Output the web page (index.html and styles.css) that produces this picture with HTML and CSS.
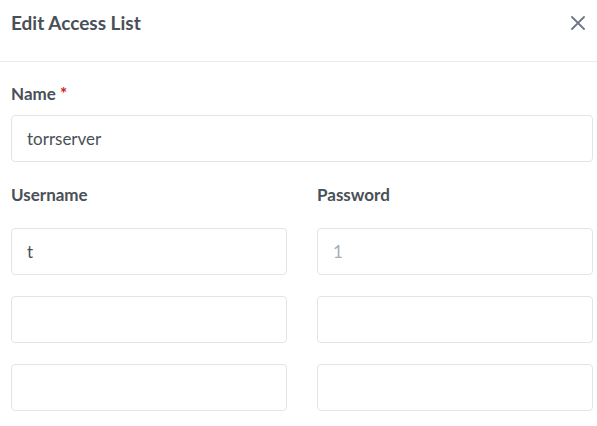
FILE: index.html
```html
<!DOCTYPE html>
<html>
<head>
<meta charset="utf-8">
<link rel="stylesheet" href="styles.css">
</head>
<body>
<div class="modal">
  <div class="modal-header">
    <h5 class="modal-title">Edit Access List</h5>
    <button class="close" aria-label="Close">
      <svg width="14" height="14" viewBox="0 0 14 14"><path d="M1 1L13 13M13 1L1 13" stroke="#6e7687" stroke-width="1.8" stroke-linecap="round"/></svg>
    </button>
  </div>
  <div class="modal-body">
    <div class="field">
      <label class="form-label">Name <span class="req">*</span></label>
      <input class="form-control" type="text" value="torrserver">
    </div>
    <div class="grid">
      <label class="form-label col-label">Username</label>
      <label class="form-label col-label">Password</label>
      <input class="form-control" type="text" value="t">
      <input class="form-control" type="text" placeholder="1">
      <input class="form-control" type="text">
      <input class="form-control" type="text">
      <input class="form-control" type="text">
      <input class="form-control" type="text">
    </div>
  </div>
</div>
</body>
</html>
```
FILE: styles.css
```css
* { box-sizing: border-box; }
body {
  margin: 0;
  background: #fff;
  font-family: Lato, "Liberation Sans", sans-serif;
  color: #495057;
}
.modal { width: 597px; }
.modal-header {
  height: 62px;
  border-bottom: 1px solid #e9ecef;
  display: flex;
  align-items: flex-start;
  justify-content: space-between;
  padding: 11px 11px 0 11px;
}
.modal-title {
  margin: 0;
  font-size: 19px;
  line-height: 24px;
  font-weight: 700;
  color: #495057;
}
.close {
  border: 0;
  background: none;
  padding: 0;
  width: 16px;
  height: 16px;
  margin-top: 4px;
  display: flex;
  align-items: center;
  justify-content: center;
}
.modal-body {
  padding: 22px 4px 0 11px;
}
.form-label {
  display: block;
  font-size: 17px;
  font-weight: 700;
  color: #495057;
  line-height: 20px;
}
.req { color: #cd201f; }
.field .form-label { margin-bottom: 11px; }
.form-control {
  display: block;
  width: 100%;
  height: 47px;
  border: 1px solid #e0e5ec;
  border-radius: 4px;
  padding: 0 15px;
  font-family: Lato, "Liberation Sans", sans-serif;
  font-size: 17px;
  color: #495057;
  background: #fff;
  outline: none;
}
.form-control::placeholder { color: #a7adb5; }
.grid {
  margin-top: 23px;
  display: grid;
  grid-template-columns: 1fr 1fr;
  column-gap: 30px;
  row-gap: 21px;
}
.col-label { margin-bottom: 2px; }
```
